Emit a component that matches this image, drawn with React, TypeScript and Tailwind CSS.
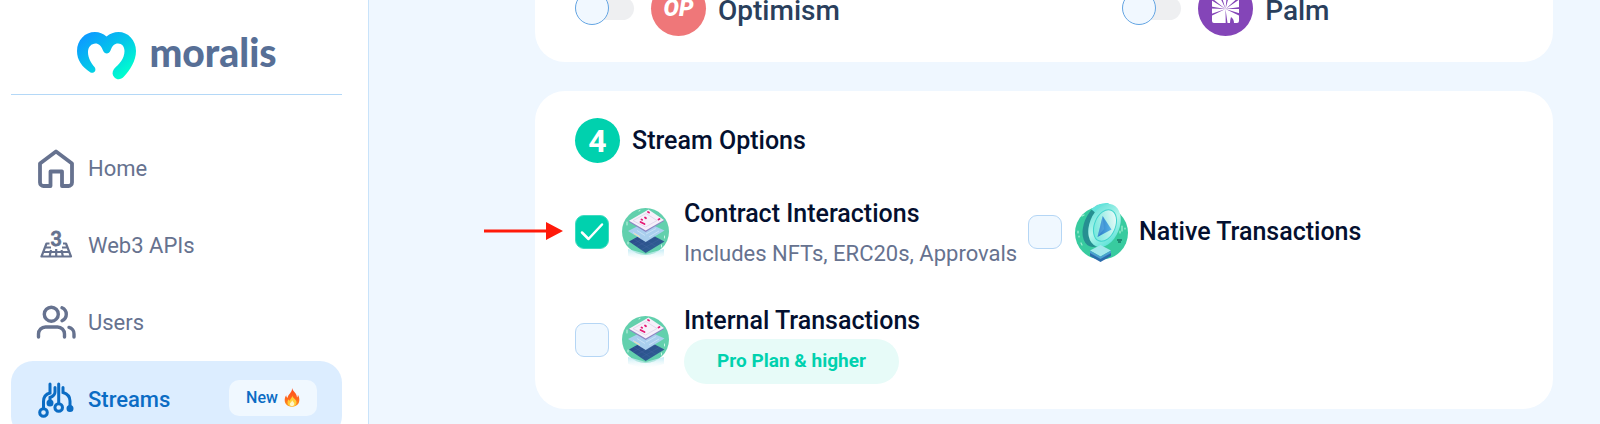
import React, { useState } from 'react';
import clsx from 'clsx';

const MoralisMark = () => (
  <svg className="h-[50px] w-[61px]" viewBox="0 0 61 50" aria-hidden="true">
    <defs>
      <linearGradient id="mark" x1="10" y1="4" x2="44" y2="48" gradientUnits="userSpaceOnUse">
        <stop offset="0" stopColor="#0c9bff" />
        <stop offset="0.5" stopColor="#04c6ea" />
        <stop offset="1" stopColor="#00ffce" />
      </linearGradient>
    </defs>
    <path
      fill="url(#mark)"
      d="M30.5 5.5C34 2.5 38 1 42.5 1C52 1 60 9 60 20C60 30 54 39 48 45.500C45 49 41 49 38.500 46.500C36 44 36 41 38 38C43 33 48.500 28 48.500 20C48.500 15.500 46 12.500 42 12.500C38.500 12.500 36 15 34.500 19.500C33 23.500 28.500 23.500 27 19.500C25.500 15 22.500 12.500 19.500 12.500C15.500 12.500 12 16 12 21C12 27 15 32 18.500 36C21 39.500 18 43 14.500 41.500C6 36 1 29 1 20C1 9 9 1 19 1C23.500 1 27 2.500 30.500 5.500Z"
    />
  </svg>
);

const HomeIcon = () => (
  <svg className="h-[42px] w-10" viewBox="0 0 40 42" fill="none" stroke="currentColor" strokeWidth="3.8" strokeLinejoin="round" aria-hidden="true">
    <path d="M20 3.500L36 15.500V34.500a3.500 3.500 0 0 1-3.500 3.500H26V23.500H14.500v14.500H7.500a3.500 3.500 0 0 1-3.500-3.500V15.500z" />
  </svg>
);

const Web3Icon = () => (
  <svg className="h-10 w-10" viewBox="0 0 40 40" fill="none" stroke="currentColor" strokeWidth="2.2" strokeLinejoin="round" aria-hidden="true">
    <path d="M13.500 17.500H10.500L5.500 30.500H35L30 17.500H27M9 21.500h6M26 21.500h6M7 26h26.500M15 24l-1.500 7M25.500 24l1.500 7M20.200 23v8" />
    <text x="20.2" y="20" textAnchor="middle" fill="currentColor" stroke="currentColor" strokeWidth="0.8" fontFamily="Roboto, sans-serif" fontSize="20" fontWeight="500">3</text>
  </svg>
);

const UsersIcon = () => (
  <svg className="h-9 w-10" viewBox="0 0 40 36" fill="none" stroke="currentColor" strokeWidth="3.4" strokeLinecap="round" aria-hidden="true">
    <circle cx="15.300" cy="9.200" r="7" />
    <path d="M2.500 32V29a7 7 0 0 1 7-7H21.500a7 7 0 0 1 7 7V32M26 2.800a7 7 0 0 1 0 12.900M33 22.400a6.500 6.500 0 0 1 5 6.500V32" />
  </svg>
);

const StreamsIcon = () => (
  <svg className="h-10 w-10" viewBox="0 0 40 40" fill="none" stroke="currentColor" strokeWidth="3" strokeLinecap="round" aria-hidden="true">
    <path d="M7.500 28V21.500C7.500 16 10 14 14 13V4M14 22V17.500C18 16 19 14.500 19 12V7.500M22.700 4V23M27 7.500V12.500C32 14 34 17 34 21V28" />
    <circle cx="7.500" cy="32.500" r="3.800" />
    <circle cx="22.700" cy="27.500" r="3.800" />
    <circle cx="14" cy="23" r="2" fill="currentColor" />
    <circle cx="34" cy="28.500" r="2" fill="currentColor" />
  </svg>
);

const FlameIcon = () => (
  <svg className="h-[19px] w-4" viewBox="0 0 16 19" aria-hidden="true">
    <defs>
      <linearGradient id="flame" x1="0" y1="0" x2="0" y2="1">
        <stop offset="0" stopColor="#ff4b1f" />
        <stop offset="0.600" stopColor="#ff6a1c" />
        <stop offset="1" stopColor="#ff9a20" />
      </linearGradient>
    </defs>
    <path fill="url(#flame)" d="M8 0C9 4 13 5 13 9.500C13.700 9 14 8 13.800 6.800C15 8.500 15.500 10.500 15.300 12.500C15 16.500 12 18.700 8 18.700C4 18.700 .7 16.500 .7 12.300C.7 10 1.300 8.500 2.200 7.200C2.300 8.500 2.700 9.300 3.600 9.800C4 6 8.500 4.500 8 0Z" />
    <path fill="#ffcf3a" d="M8.300 7.500C8.500 10.500 12.500 11 12.500 14.200C12.500 17 10.700 18.500 8 18.500C5.200 18.500 3.300 16.800 3.500 14C3.600 12.800 4 12 4.700 11.300C4.900 12.300 5.300 12.700 6 12.800C6 10.500 8.300 10 8.300 7.500Z" />
    <path fill="#fff6c8" d="M8.300 12.200C8.500 13.700 10.300 14 10.300 15.800C10.300 17.400 9.300 18.200 8 18.200C6.600 18.200 5.700 17.200 5.800 15.800C6 14.300 8 14 8.300 12.200Z" />
  </svg>
);

const PalmIcon = () => (
  <svg className="size-[55px] shrink-0" viewBox="0 0 55 55" aria-hidden="true">
    <circle cx="27.500" cy="27.500" r="27.500" fill="#8445b8" />
    <path fill="#fff" d="M16 14H39q2 0 2 2V40q0 2-2 2H36q0-4-3-6q-1 3-1 6H16q-2 0-2-2V16q0-2 2-2z" />
    <path fill="#8445b8" d="M27.500 28L13 25.500V27.500zM27.500 28L13 33V35zM27.500 28L13 16.500V19zM27.500 28L20.500 13H23zM27.500 28L29 13H31.500zM27.500 28L42 15V18zM27.500 28L42 26V28zM27.500 28L42 32.500V35zM27.500 28L27.700 42H29.500z" />
  </svg>
);

const StackIcon = ({ id }: { id: string }) => (
  <svg className="-mb-1.5 h-[54px] w-[47px] shrink-0" viewBox="0 0 47 54" aria-hidden="true">
    <defs>
      <linearGradient id={`${id}-mist`} x1="0" y1="0" x2="0" y2="1">
        <stop offset="0" stopColor="#bfeaf4" />
        <stop offset="1" stopColor="#ffffff" stopOpacity="0" />
      </linearGradient>
      <linearGradient id={`${id}-base`} x1="0" y1="0" x2="1" y2="1">
        <stop offset="0" stopColor="#2a4587" />
        <stop offset="1" stopColor="#2f6596" />
      </linearGradient>
    </defs>
    <circle cx="23.500" cy="23.500" r="23.500" fill="#62d0ad" />
    <path fill={`url(#${id}-mist)`} d="M6 41L23.700 46L42 41V48L23.700 53L6 48z" />
    <path fill={`url(#${id}-base)`} d="M7 33.500L24 24L42.500 33.500L23.700 45z" />
    <path stroke="#4666a4" strokeWidth="0.400" d="M11 36L29 26.500M15 38.500L33 29M19.500 41.500L38 31M12 31L29 41.500M17 28L34 38.500" />
    <path fill="#a9cfee" d="M6 23L24 14L42.500 22.500L23.700 34z" />
    <path stroke="#cfe5f8" strokeWidth="0.800" d="M11 24.500L17 28M15 22.500L23 27.500M27 29L37 23M24 26L34 20.500" />
    <path stroke="#f4e0a4" strokeWidth="1" d="M12 25.500L18 29" />
    <path fill="#8d86c4" d="M7 14L23.700 24L42 13V11.500L23.700 21L7 12.500z" />
    <path fill="#f6f0fa" d="M7 12.700L26.500 1.500L42 12L23.700 22.500z" />
    <path stroke="#ddd3ea" strokeWidth="0.800" fill="none" d="M11 12.700L24 5.500L35 12.500L23.500 19z" />
    <path stroke="#e41773" strokeWidth="1.800" strokeLinecap="round" d="M18.500 14L22.500 16M19.500 11.500l.6 .3M23 9.500l1 .8M26 4l1 .5M36.500 11.500l1-.5" />
    <path stroke="#c8f5e4" strokeWidth="1" strokeLinecap="round" d="M5 14v3M39.500 37v2M42.500 28v2M6 34v2M17 3l1-.5" />
  </svg>
);

const CoinIcon = () => (
  <svg className="h-[60px] w-[54px] shrink-0" viewBox="1 0 54 60" aria-hidden="true">
    <defs>
      <linearGradient id="coin-rim" x1="0" y1="0" x2="1" y2="1">
        <stop offset="0" stopColor="#55dcd5" />
        <stop offset="0.500" stopColor="#b5f6ec" />
        <stop offset="1" stopColor="#40dcd2" />
      </linearGradient>
      <linearGradient id="coin-face" x1="1" y1="0" x2="0" y2="1">
        <stop offset="0" stopColor="#ffffff" />
        <stop offset="0.500" stopColor="#a9efe8" />
        <stop offset="1" stopColor="#5fe6d8" />
      </linearGradient>
      <linearGradient id="coin-tri" x1="0" y1="0" x2="1" y2="0">
        <stop offset="0" stopColor="#2b78c4" />
        <stop offset="1" stopColor="#55b4e8" />
      </linearGradient>
    </defs>
    <circle cx="27.500" cy="31" r="26.500" fill="#38cb9f" />
    <path stroke="#a5f0d4" strokeWidth="1.200" strokeLinecap="round" d="M8 14l2-1M4 29v2M5 34v1M7 41l1 2M48 24v5M46 29v2M51 26v1" />
    <path stroke="#167a68" strokeWidth="1.300" d="M43 38h5M44 40h3" />
    <ellipse cx="24" cy="23.500" rx="14" ry="22.500" transform="rotate(22 24 23.500)" fill="#268f91" />
    <path fill="#64e4dc" d="M17 7Q26 0 34 1L40 5L25 14z" />
    <ellipse cx="30.500" cy="23.500" rx="15" ry="22.500" transform="rotate(22 30.500 23.500)" fill="url(#coin-rim)" />
    <ellipse cx="31" cy="23.500" rx="10.500" ry="16.500" transform="rotate(22 31 23.500)" fill="url(#coin-face)" stroke="#3fd3cc" strokeWidth="1" />
    <path fill="url(#coin-tri)" d="M28.700 14L37.500 27.500L23.500 35z" />
    <path fill="#79c9ef" d="M28.700 14L30 27L23.500 35z" opacity="0.300" />
    <path fill="#2b6cab" d="M16 50L26.500 55.500L37 50V54L26.500 60L16 54z" />
    <path fill="#a1e8ec" d="M16 48.500L26.500 43L37 48.500L26.500 54.500z" />
    <path fill="#4aa1d0" d="M16 48.500L26.500 54.500L37 48.500V51L26.500 57L16 51z" />
  </svg>
);

const navItems = [
  { label: 'Home', icon: HomeIcon },
  { label: 'Web3 APIs', icon: Web3Icon },
  { label: 'Users', icon: UsersIcon },
  { label: 'Streams', icon: StreamsIcon, active: true },
];

const Sidebar = () => (
  <aside className="w-[369px] shrink-0 border-r border-[#c9e3fa] bg-white pl-[11px] pr-[26px]">
    <div className="flex h-[95px] items-center justify-center gap-3 border-b border-[#b4d8f7] pt-[18px]">
      <MoralisMark />
      <span className="pb-2 font-[Lato,sans-serif] text-[39px] leading-none font-black text-[#576f96]">moralis</span>
    </div>
    <nav className="mt-[35px]">
      {navItems.map(({ label, icon: Icon, active }) => (
        <a
          key={label}
          href="#"
          className={clsx(
            'flex h-[77px] items-center gap-3 rounded-[22px] px-[25px] text-[22px]',
            active ? 'bg-[#dcedff] font-medium text-[#0b6cc4]' : 'text-[#66728f]'
          )}
        >
          <Icon />
          <span>{label}</span>
          {active && (
            <span className="mb-1 ml-auto flex h-9 w-[88px] items-center justify-center gap-1.5 rounded-[10px] bg-[#f0f8ff] text-base">
              New
              <FlameIcon />
            </span>
          )}
        </a>
      ))}
    </nav>
  </aside>
);

const NetworkToggle = ({ label, children }: { label: string; children: React.ReactNode }) => (
  <label className="flex items-center text-[28px] leading-8 font-medium text-[#2a3f5c]">
    <input type="checkbox" role="switch" className="peer sr-only" />
    <span className="relative mr-[17px] h-[23px] w-[59px] rounded-full bg-[#eeeff1]">
      <span className="absolute -top-[6px] left-0 size-[34px] rounded-full border border-[#64a5e3] bg-[#f1f8ff]" />
    </span>
    {children}
    <span className="ml-3 pt-1">{label}</span>
  </label>
);

interface OptionProps {
  id: string;
  title: string;
  icon: React.ReactNode;
  defaultChecked?: boolean;
  children?: React.ReactNode;
}

const StreamOption = ({ id, title, icon, defaultChecked = false, children }: OptionProps) => {
  const [checked, setChecked] = useState(defaultChecked);

  return (
    <div className="flex items-center">
      <span className="relative mr-[13px] size-[34px] shrink-0">
        <input
          id={id}
          type="checkbox"
          checked={checked}
          onChange={(e) => setChecked(e.target.checked)}
          className="block size-[34px] appearance-none rounded-[9px] border border-[#b5d6f5] bg-[#f0f8ff] checked:border-[#3fdcc0] checked:bg-[#00d1ae]"
        />
        {checked && (
          <svg className="pointer-events-none absolute inset-0" viewBox="0 0 34 34" fill="none" stroke="#fff" strokeWidth="2.500" strokeLinecap="round" strokeLinejoin="round" aria-hidden="true">
            <path d="M7 17.500L13.500 24L27 9.500" />
          </svg>
        )}
      </span>
      {icon}
      <div className={clsx('whitespace-nowrap', children && 'pt-2')}>
        <label htmlFor={id} className="block text-[25px] leading-9 font-medium text-[#04102f]">
          {title}
        </label>
        {children}
      </div>
    </div>
  );
};

const App = () => {
  return (
    <div className="flex h-screen overflow-hidden bg-[#eff7ff] font-[Roboto,sans-serif]">
      <Sidebar />
      <main className="-mt-[19px] min-w-0 grow pr-[47px] pl-[166px]">
        <section className="grid grid-cols-[7fr_5fr] rounded-b-[30px] bg-white px-10 pb-[26px]">
          <NetworkToggle label="Optimism">
            <span className="flex size-[55px] items-center justify-center rounded-full bg-[#ef7779] text-[23px] font-black text-white italic" aria-hidden="true">
              OP
            </span>
          </NetworkToggle>
          <NetworkToggle label="Palm">
            <PalmIcon />
          </NetworkToggle>
        </section>

        <section className="relative mt-[29px] rounded-[30px] bg-white px-10 pt-[27px] pb-[25px]">
          <h2 className="flex items-center gap-3 text-[25px] font-medium text-[#04102f]">
            <span className="flex size-[45px] items-center justify-center rounded-full bg-[#00d1ae] text-[32px] font-bold text-white">4</span>
            Stream Options
          </h2>
          <div className="mt-[25px] grid grid-cols-[453px_1fr] gap-y-[19px]">
            <StreamOption
              id="contract"
              title="Contract Interactions"
              defaultChecked
              icon={<span className="mr-[15px]"><StackIcon id="stack-a" /></span>}
            >
              <p className="text-[22px] leading-11 text-[#66728f]">Includes NFTs, ERC20s, Approvals</p>
            </StreamOption>
            <StreamOption id="native" title="Native Transactions" icon={<span className="mr-[10px]"><CoinIcon /></span>} />
            <StreamOption
              id="internal"
              title="Internal Transactions"
              icon={<span className="mr-[15px]"><StackIcon id="stack-b" /></span>}
            >
              <span className="flex h-[45px] w-[215px] items-center justify-center rounded-full bg-[#e7fbf8] text-[19px] font-bold text-[#00d1ae]">
                Pro Plan &amp; higher
              </span>
            </StreamOption>
          </div>
          {/* pointer to the contract interactions box */}
          <svg className="absolute top-[131px] -left-[51px] h-[18px] w-[79px]" viewBox="0 0 79 18" fill="#ff1a0a" aria-hidden="true">
            <path d="M0 7.500H62V0L79 9L62 18V10.500H0z" />
          </svg>
        </section>
      </main>
    </div>
  );
};

export default App;
